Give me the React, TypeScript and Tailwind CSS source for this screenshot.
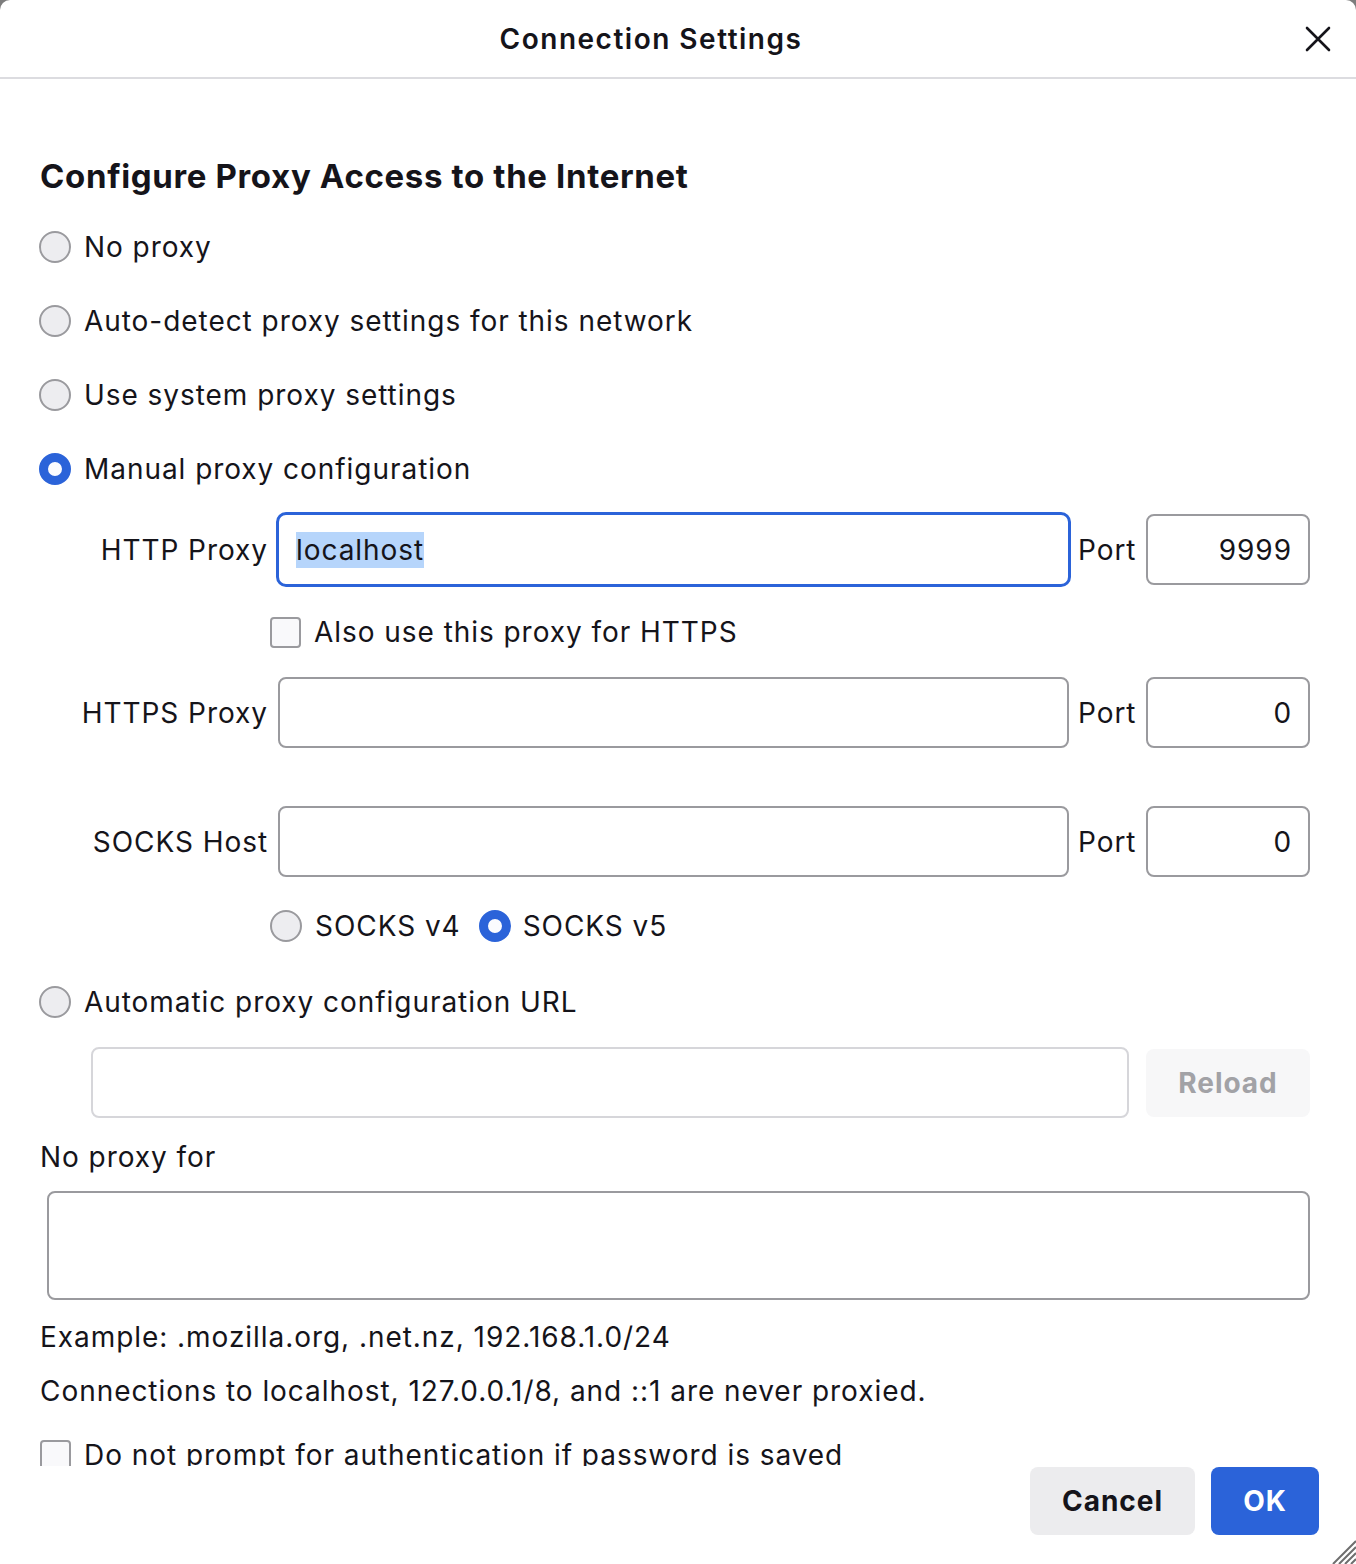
import React from "react"

const Radio = ({ checked }: { checked?: boolean }) =>
  checked ? (
    <span className="box-border inline-block h-[32px] w-[32px] shrink-0 rounded-full border-[9px] border-[#2b63d9] bg-[#fbfbfe]" />
  ) : (
    <span className="box-border inline-block h-[32px] w-[32px] shrink-0 rounded-full border-2 border-[#9a9a9e] bg-[#ededf0]" />
  )

const Checkbox = () => (
  <span className="box-border inline-block h-[31px] w-[31px] shrink-0 rounded-[4px] border-2 border-[#9a9a9e] bg-[#f9f9fb]" />
)

const RadioRow = ({ label, checked }: { label: string; checked?: boolean }) => (
  <div className="flex h-[74px] items-center">
    <div className="ml-[-1px] flex items-center">
      <Radio checked={checked} />
    </div>
    <span className="ml-[13px]">{label}</span>
  </div>
)

interface ProxyRowProps {
  label: string
  port: string
  value?: string
  focused?: boolean
  className?: string
}

const ProxyRow = ({ label, port, value, focused, className }: ProxyRowProps) => {
  return (
    <div className={`flex h-[71px] items-center ${className ?? ""}`}>
      <div className="w-[236px] shrink-0 pr-[8px] text-right">{label}</div>
      <div className="flex h-full min-w-0 flex-1 items-center">
        {focused ? (
          <div className="box-border flex h-[75px] w-full items-center rounded-[10px] border-[3px] border-[#2b63d9] pl-[17px]">
            <span className="bg-[#b6d5fb] leading-[36px]">{value}</span>
          </div>
        ) : (
          <div className="mx-[2px] box-border h-[71px] w-full rounded-[8px] border-2 border-[#9a9a9e]" />
        )}
      </div>
      <div className="w-[75px] shrink-0 pl-[7px]">Port</div>
      <div className="box-border flex h-[71px] w-[164px] shrink-0 items-center justify-end rounded-[8px] border-2 border-[#9a9a9e] pr-[16px]">
        {port}
      </div>
    </div>
  )
}

export default function App() {
  return (
    <div
      className="relative h-[1564px] w-[1356px] overflow-hidden bg-[#7d7d7d] text-[28px] tracking-[0.95px] text-[#15141a]"
      style={{ fontFamily: "Inter, 'Noto Sans', sans-serif" }}
    >
      <div className="flex h-full w-full flex-col rounded-t-[10px] bg-white">
        {/* header */}
        <div className="relative flex h-[79px] shrink-0 items-center justify-center border-b-2 border-[#dcdce0] pr-[54px]">
          <span className="font-semibold tracking-[1.5px]">Connection Settings</span>
          <svg
            className="absolute right-[25px] top-[26px]"
            width="26"
            height="26"
            viewBox="0 0 26 26"
            fill="none"
            stroke="#15141a"
            strokeWidth="2.6"
            strokeLinecap="round"
          >
            <path d="M2 2L24 24M24 2L2 24" />
          </svg>
        </div>

        {/* scrollable content */}
        <div className="h-[1387px] shrink-0 overflow-hidden pl-[40px] pr-[46px]">
          <div className="mt-[77px] text-[33px] font-bold leading-[40px] tracking-[0.65px]">
            Configure Proxy Access to the Internet
          </div>
          <div className="mt-[14px]">
            <RadioRow label="No proxy" />
            <RadioRow label="Auto-detect proxy settings for this network" />
            <RadioRow label="Use system proxy settings" />
            <RadioRow label="Manual proxy configuration" checked />
          </div>

          <ProxyRow label="HTTP Proxy" port="9999" value="localhost" focused className="mt-[6px] h-[75px]" />

          <div className="mt-[15px] flex h-[60px] items-center pl-[230px]">
            <Checkbox />
            <span className="ml-[13px]">Also use this proxy for HTTPS</span>
          </div>

          <ProxyRow label="HTTPS Proxy" port="0" className="mt-[15px]" />
          <ProxyRow label="SOCKS Host" port="0" className="mt-[58px]" />

          <div className="mt-[19px] flex h-[60px] items-center pl-[230px]">
            <Radio />
            <span className="ml-[13px]">SOCKS v4</span>
            <span className="ml-[18px] flex items-center">
              <Radio checked />
            </span>
            <span className="ml-[12px]">SOCKS v5</span>
          </div>

          <div className="mt-[9px]">
            <RadioRow label="Automatic proxy configuration URL" />
          </div>

          <div className="mt-[8px] flex h-[71px] items-center pl-[51px]">
            <div className="box-border h-[71px] flex-1 rounded-[8px] border-2 border-[#d6d6da]" />
            <div className="ml-[17px] flex h-[68px] w-[164px] items-center justify-center rounded-[8px] bg-[#f7f7f8] font-bold text-[#a2a2a6]">
              Reload
            </div>
          </div>

          <div className="mt-[19px] leading-[40px]">No proxy for</div>
          <div className="ml-[7px] mt-[14px] box-border h-[109px] rounded-[8px] border-2 border-[#9a9a9e]" />

          <div className="mt-[17px] leading-[40px]">Example: .mozilla.org, .net.nz, 192.168.1.0/24</div>
          <div className="mt-[14px] leading-[40px]">Connections to localhost, 127.0.0.1/8, and ::1 are never proxied.</div>

          <div className="mt-[14px] flex h-[60px] items-center">
            <Checkbox />
            <span className="ml-[13px]">Do not prompt for authentication if password is saved</span>
          </div>
        </div>

        {/* footer */}
        <div className="flex flex-1 items-start justify-end gap-[16px] pr-[37px] pt-px">
          <div className="flex h-[68px] w-[165px] items-center justify-center rounded-[8px] bg-[#ececee] font-bold">
            Cancel
          </div>
          <div className="flex h-[68px] w-[108px] items-center justify-center rounded-[8px] bg-[#2b63d9] font-bold text-white">
            OK
          </div>
        </div>
      </div>

      {/* resize grip */}
      <svg
        className="absolute bottom-0 right-0"
        width="24"
        height="24"
        viewBox="0 0 24 24"
        stroke="#6e6e6e"
        strokeWidth="2"
      >
        <path d="M24 1L1 24M24 7L7 24M24 13L13 24M24 19L19 24" />
      </svg>
    </div>
  )
}
